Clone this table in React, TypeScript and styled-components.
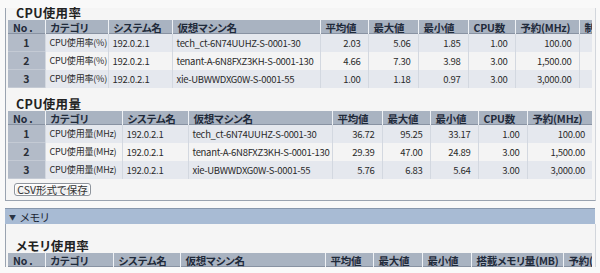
import React from "react";
import styled, { createGlobalStyle } from "styled-components";

const Global = createGlobalStyle`
  html, body { margin: 0; padding: 0; background: #f4f4f4; }
  body {
    font-family: "Noto Sans CJK JP", "Noto Sans", sans-serif;
    font-feature-settings: "palt";
    color: #333;
    width: 600px;
    height: 273px;
    overflow: hidden;
  }
`;

const Page = styled.div`
  width: 600px;
  height: 273px;
  overflow: hidden;
  background: #f9f9f9;
  padding-top: 8px;
  box-sizing: border-box;
`;

const Panel = styled.div<{ $open?: boolean }>`
  margin-left: 5px;
  width: 591px;
  box-sizing: border-box;
  border-left: 1px solid #9aa3b0;
  border-right: 1px solid #d2d6dc;
  border-bottom: ${(p) => (p.$open ? "none" : "1px solid #9aa3b0")};
  padding: 0 3px 0 2px;
  background: #f5f5f5;
`;

const Title = styled.div<{ $h: number }>`
  height: ${(p) => p.$h}px;
  display: flex;
  align-items: flex-end;
  padding-left: 8px;
  box-sizing: border-box;
  font-size: 12.5px;
  line-height: 12px;
  padding-bottom: 1px;
  font-weight: bold;
  color: #222;
  letter-spacing: 0.3px;
`;

const TableWrap = styled.div`
  width: 584px;
  overflow: hidden;
`;

const Table = styled.table<{ $w: number }>`
  width: ${(p) => p.$w}px;
  min-width: ${(p) => p.$w}px;
  border-collapse: collapse;
  border-spacing: 0;
  table-layout: fixed;
  font-size: 10px;
`;

const HeadRow = styled.tr`
  height: 14px;
`;

const Th = styled.th<{ $w: number }>`
  width: ${(p) => p.$w}px;
  height: 14px;
  padding: 0 0 0 5px;
  background: #a9b3c1;
  border-left: 1px solid #eef1f5;
  box-shadow: inset 0 -1px 0 #8892a2;
  text-align: left;
  font-size: 10.5px;
  letter-spacing: -0.2px;
  font-weight: bold;
  color: #1f2a3a;
  white-space: nowrap;
  overflow: hidden;
  line-height: 13px;
  box-sizing: border-box;
  &:first-child { border-left: none; }
`;

const Tr = styled.tr<{ $alt: boolean }>`
  height: 18px;
  background: ${(p) => (p.$alt ? "#f4f4f4" : "#e5e8ee")};
`;

const Td = styled.td<{ $num?: boolean; $tight?: boolean }>`
  height: 18px;
  padding: 0 ${(p) => (p.$num ? "7px" : "2px")} 0 ${(p) => (p.$num ? "0" : "4px")};
  text-align: ${(p) => (p.$num ? "right" : "left")};
  border-left: 1px solid #d3d8e0;
  white-space: nowrap;
  overflow: hidden;
  color: #2a2a2a;
  box-sizing: border-box;
  line-height: 16px;
  font-size: ${(p) => (p.$tight ? "9px" : "9.5px")};
  letter-spacing: ${(p) => (p.$tight ? "-0.2px" : "-0.3px")};
`;

const NoTd = styled.td`
  height: 18px;
  padding: 0;
  background: #b3bbc8;
  text-align: center;
  font-weight: bold;
  color: #2a2f38;
  font-size: 10.5px;
  line-height: 16px;
  box-shadow: inset 0 -1px 0 #c4cad4;
  box-sizing: border-box;
`;

const ButtonRow = styled.div`
  display: flex;
  height: 21px;
  padding: 4px 0 0 6px;
  box-sizing: border-box;
  align-items: flex-start;
`;

const CsvButton = styled.button`
  font-family: inherit;
  font-feature-settings: "palt";
  font-size: 10.5px;
  height: 13px;
  width: 77px;
  padding: 0;
  margin: 0;
  line-height: 11px;
  border: 1px solid #8e949c;
  border-radius: 3px;
  background: linear-gradient(#fdfdfd, #e8e8e8);
  color: #333;
  box-shadow: inset 0 0 0 1px #fff;
`;

const SectionBar = styled.div`
  margin: 7px 0 0 5px;
  width: 590px;
  height: 16px;
  box-sizing: border-box;
  background: #a8bbd4;
  border-top: 1px solid #8797ad;
  display: flex;
  align-items: center;
  padding-left: 4px;
  font-size: 11px;
  color: #1c2633;
  gap: 4px;
`;

const Tri = styled.span`
  font-size: 7px;
  color: #2a3444;
`;

type Col = { label: string; w: number; num?: boolean; tight?: boolean };

function DataTable({ cols, rows }: { cols: Col[]; rows: string[][] }) {
  const total = cols.reduce((s, c) => s + c.w, 0);
  return (
    <TableWrap>
      <Table $w={total}>
        <thead>
          <HeadRow>
            {cols.map((c, i) => (
              <Th key={i} $w={c.w}>
                {c.label}
              </Th>
            ))}
          </HeadRow>
        </thead>
        <tbody>
          {rows.map((r, ri) => (
            <Tr key={ri} $alt={ri % 2 === 1}>
              <NoTd>{ri + 1}</NoTd>
              {r.map((v, ci) => (
                <Td key={ci} $num={cols[ci + 1]?.num} $tight={cols[ci + 1]?.tight}>
                  {v}
                </Td>
              ))}
            </Tr>
          ))}
        </tbody>
      </Table>
    </TableWrap>
  );
}

const cols1: Col[] = [
  { label: "No .", w: 37 },
  { label: "カテゴリ", w: 63, tight: true },
  { label: "システム名", w: 64 },
  { label: "仮想マシン名", w: 148 },
  { label: "平均値", w: 48, num: true },
  { label: "最大値", w: 50, num: true },
  { label: "最小値", w: 50, num: true },
  { label: "CPU数", w: 47, num: true },
  { label: "予約(MHz)", w: 64, num: true },
  { label: "制限(MHz)", w: 64, num: true },
];

const rows1 = [
  ["CPU使用率(%)", "192.0.2.1", "tech_ct-6N74UUHZ-S-0001-30", "2.03", "5.06", "1.85", "1.00", "100.00", ""],
  ["CPU使用率(%)", "192.0.2.1", "tenant-A-6N8FXZ3KH-S-0001-130", "4.66", "7.30", "3.98", "3.00", "1,500.00", ""],
  ["CPU使用率(%)", "192.0.2.1", "xie-UBWWDXG0W-S-0001-55", "1.00", "1.18", "0.97", "3.00", "3,000.00", ""],
];

const cols2: Col[] = [
  { label: "No .", w: 37 },
  { label: "カテゴリ", w: 77, tight: true },
  { label: "システム名", w: 66 },
  { label: "仮想マシン名", w: 144 },
  { label: "平均値", w: 50, num: true },
  { label: "最大値", w: 48, num: true },
  { label: "最小値", w: 48, num: true },
  { label: "CPU数", w: 49, num: true },
  { label: "予約(MHz)", w: 65, num: true },
];

const rows2 = [
  ["CPU使用量(MHz)", "192.0.2.1", "tech_ct-6N74UUHZ-S-0001-30", "36.72", "95.25", "33.17", "1.00", "100.00"],
  ["CPU使用量(MHz)", "192.0.2.1", "tenant-A-6N8FXZ3KH-S-0001-130", "29.39", "47.00", "24.89", "3.00", "1,500.00"],
  ["CPU使用量(MHz)", "192.0.2.1", "xie-UBWWDXG0W-S-0001-55", "5.76", "6.83", "5.64", "3.00", "3,000.00"],
];

const cols3: Col[] = [
  { label: "No .", w: 37 },
  { label: "カテゴリ", w: 68 },
  { label: "システム名", w: 67 },
  { label: "仮想マシン名", w: 145 },
  { label: "平均値", w: 48, num: true },
  { label: "最大値", w: 49, num: true },
  { label: "最小値", w: 49, num: true },
  { label: "搭載メモリ量(MB)", w: 92, num: true },
  { label: "予約(MB)", w: 64, num: true },
];

export default function App() {
  return (
    <>
      <Global />
      <Page>
        <Panel>
          <Title $h={12}>CPU使用率</Title>
          <DataTable cols={cols1} rows={rows1} />
          <Title $h={23}>CPU使用量</Title>
          <DataTable cols={cols2} rows={rows2} />
          <ButtonRow>
            <CsvButton>CSV形式で保存</CsvButton>
          </ButtonRow>
        </Panel>
        <SectionBar>
          <Tri>▼</Tri>
          メモリ
        </SectionBar>
        <Panel $open>
          <Title $h={29}>メモリ使用率</Title>
          <DataTable cols={cols3} rows={[]} />
        </Panel>
      </Page>
    </>
  );
}
